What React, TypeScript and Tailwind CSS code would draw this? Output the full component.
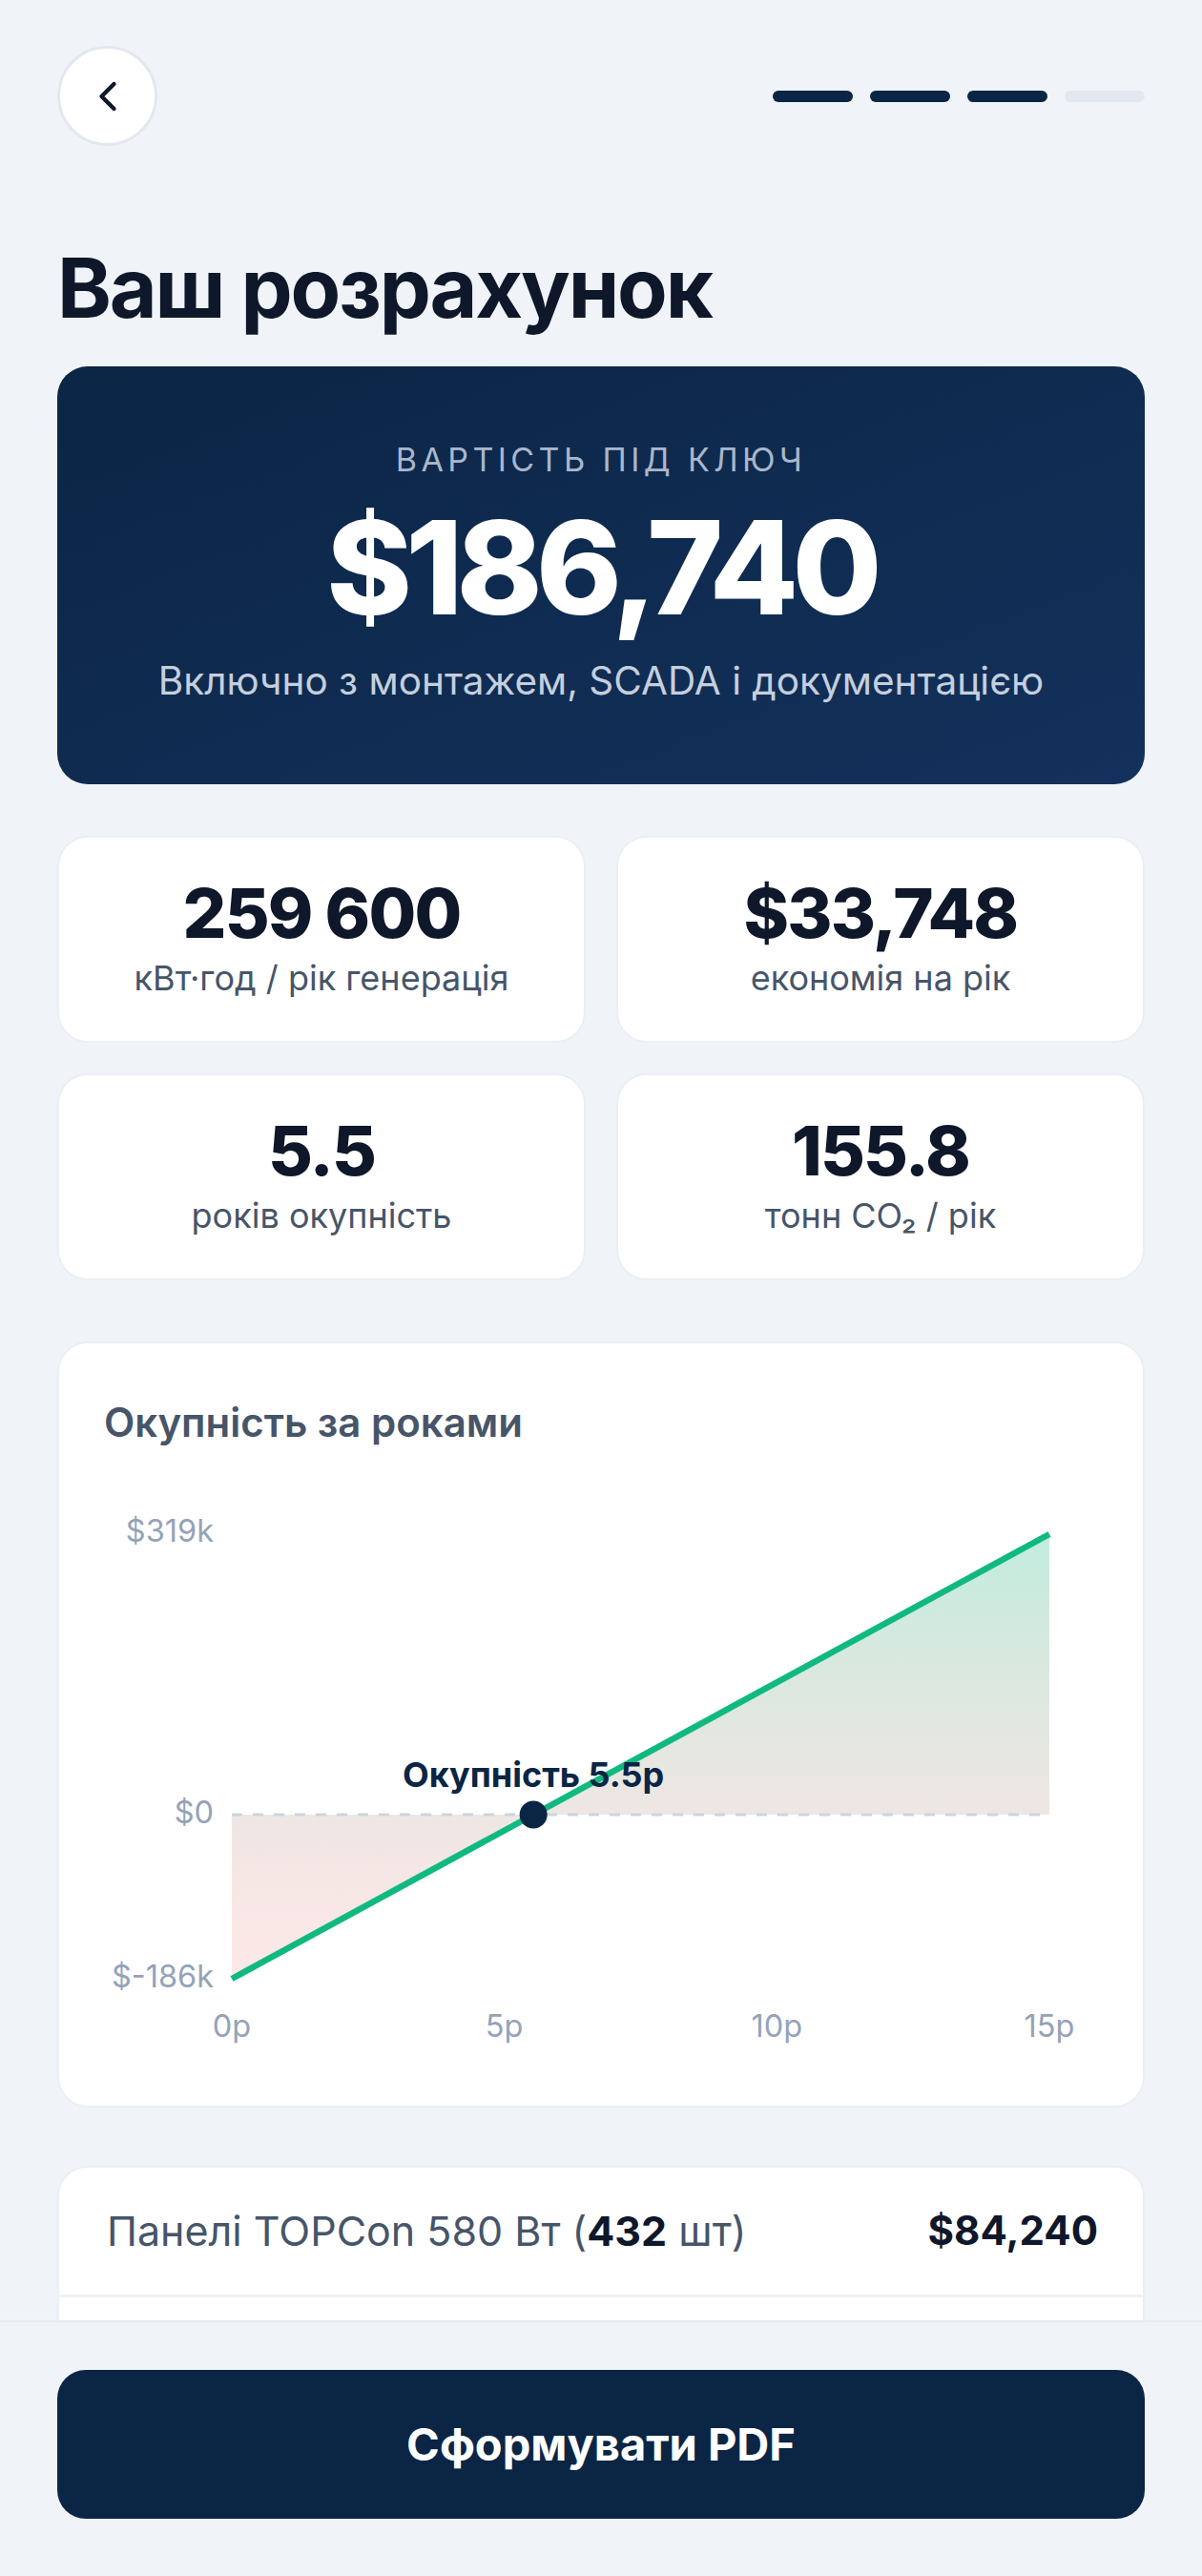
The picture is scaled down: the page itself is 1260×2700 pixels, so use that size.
import React from "react";
import { ChevronLeft } from "lucide-react";

const stats = [
  { value: "259 600", label: "кВт·год / рік генерація" },
  { value: "$33,748", label: "економія на рік" },
  { value: "5.5", label: "років окупність" },
  { value: "155.8", label: "тонн CO₂ / рік" },
];

function PaybackChart() {
  const x0 = 136;
  const x1 = 993;
  const yTop = 68;
  const yBot = 534;
  const cost = 186.74;
  const save = 33.748;
  const years = 15;
  const maxV = years * save - cost;
  const minV = -cost;
  const sx = (t: number) => x0 + (t / years) * (x1 - x0);
  const sy = (v: number) => yTop + ((maxV - v) / (maxV - minV)) * (yBot - yTop);
  const yZero = sy(0);
  const payback = cost / save;
  const px = sx(payback);
  const ticks = [0, 5, 10, 15];

  return (
    <svg width="1046" height="630" viewBox="0 0 1046 630" className="block">
      <defs>
        <linearGradient id="areaGrad" x1="0" y1={yTop} x2="0" y2={yBot} gradientUnits="userSpaceOnUse">
          <stop offset="0" stopColor="#10b981" stopOpacity="0.26" />
          <stop offset="1" stopColor="#ef4444" stopOpacity="0.12" />
        </linearGradient>
      </defs>
      <path
        d={`M${x0},${yZero} L${x0},${sy(minV)} L${x1},${sy(maxV)} L${x1},${yZero} Z`}
        fill="url(#areaGrad)"
      />
      <line x1={x0} y1={yZero} x2={x1} y2={yZero} stroke="#cbd5e1" strokeWidth="3" strokeDasharray="11 11" />
      <line x1={x0} y1={sy(minV)} x2={x1} y2={sy(maxV)} stroke="#10b981" strokeWidth="6.5" />
      <text x="117" y="76" textAnchor="end" fontSize="32.5" fill="#94a3b8">$319k</text>
      <text x="117" y="371" textAnchor="end" fontSize="32.5" fill="#94a3b8">$0</text>
      <text x="117" y="543" textAnchor="end" fontSize="32.5" fill="#94a3b8">$-186k</text>
      {ticks.map((t) => (
        <text key={t} x={sx(t)} y="595" textAnchor="middle" fontSize="32.5" fill="#94a3b8">
          {t}р
        </text>
      ))}
      <circle cx={px} cy={yZero} r="14.5" fill="#0b2545" />
      <text x={px} y="333" textAnchor="middle" fontSize="36" fontWeight="700" fill="#0b2545">
        Окупність 5.5р
      </text>
    </svg>
  );
}

export default function App() {
  return (
    <div className="relative h-[2700px] overflow-hidden bg-[#f0f4f8] font-['Inter',sans-serif] text-[#0f172a]">
      <div className="px-[60px] pt-[48px]">
        <div className="flex items-center justify-between">
          <button className="flex h-[105px] w-[105px] items-center justify-center rounded-full border-[3px] border-[#e2e8f0] bg-white">
            <ChevronLeft size={52} strokeWidth={2} color="#0f172a" />
          </button>
          <div className="flex gap-[18px]">
            <div className="h-[12px] w-[84px] rounded-full bg-[#0b2545]" />
            <div className="h-[12px] w-[84px] rounded-full bg-[#0b2545]" />
            <div className="h-[12px] w-[84px] rounded-full bg-[#0b2545]" />
            <div className="h-[12px] w-[84px] rounded-full bg-[#e2e8f0]" />
          </div>
        </div>

        <h1 className="mt-[106px] text-[86px] font-bold leading-none tracking-[-0.025em] text-[#0f172a]">
          Ваш розрахунок
        </h1>

        <div className="mt-[39px] rounded-[32px] bg-linear-to-br from-[#0b2545] to-[#13315c] pt-[81px] pb-[87px] text-center">
          <div className="text-[34px] uppercase leading-none tracking-[0.13em] text-[#a9b7cc]">
            Вартість під ключ
          </div>
          <div className="mt-[28px] text-[136px] font-extrabold leading-none tracking-[-0.05em] text-white">
            $186,740
          </div>
          <div className="mt-[31px] text-[40.5px] leading-none text-[#c5cfdd]">
            Включно з монтажем, SCADA і документацією
          </div>
        </div>

        <div className="mt-[54px] grid grid-cols-2 gap-[32px]">
          {stats.map((s) => (
            <div
              key={s.label}
              className="rounded-[32px] border-[2px] border-[#eaeff5] bg-white pt-[43px] pb-[48px] text-center"
            >
              <div className="text-[72px] font-extrabold leading-none tracking-[-0.025em] text-[#0f172a]">
                {s.value}
              </div>
              <div className="mt-[14px] text-[36px] leading-none text-[#475569]">{s.label}</div>
            </div>
          ))}
        </div>

        <div className="mt-[64px] rounded-[32px] border-[2px] border-[#eaeff5] bg-white px-[45px] pt-[62px] pb-[37px]">
          <div className="pl-[2px] text-[42px] font-semibold leading-none text-[#475569]">Окупність за роками</div>
          <div className="mt-[28px]">
            <PaybackChart />
          </div>
        </div>

        <div className="mt-[61px] rounded-[32px] border-[2px] border-[#eaeff5] bg-white">
          <div className="flex h-[136px] items-center justify-between border-b-[3px] border-[#eef2f7] pl-[50px] pr-[47px]">
            <span className="text-[43px] leading-none text-[#475569]">
              Панелі TOPCon 580 Вт (<b className="font-bold text-[#0f172a]">432</b> шт)
            </span>
            <span className="text-[42px] font-bold leading-none text-[#0f172a]">$84,240</span>
          </div>
          <div className="flex h-[136px] items-center justify-between border-b-[3px] border-[#eef2f7] pl-[50px] pr-[47px]">
            <span className="text-[43px] leading-none text-[#475569]">
              Інвертори Huawei 100 кВт (<b className="font-bold text-[#0f172a]">2</b> шт)
            </span>
            <span className="text-[42px] font-bold leading-none text-[#0f172a]">$18,400</span>
          </div>
          <div className="flex h-[136px] items-center justify-between pl-[50px] pr-[47px]">
            <span className="text-[43px] leading-none text-[#475569]">Монтаж і кріплення</span>
            <span className="text-[42px] font-bold leading-none text-[#0f172a]">$52,100</span>
          </div>
        </div>
      </div>

      <div className="absolute bottom-0 left-0 right-0 h-[268px] border-t-[2px] border-[#e6ebf1] bg-[#f0f4f8] px-[60px] pt-[50px]">
        <button className="flex h-[156px] w-full items-center justify-center rounded-[30px] bg-[#0b2545] text-[47px] font-bold text-white">
          Сформувати PDF
        </button>
      </div>
    </div>
  );
}
